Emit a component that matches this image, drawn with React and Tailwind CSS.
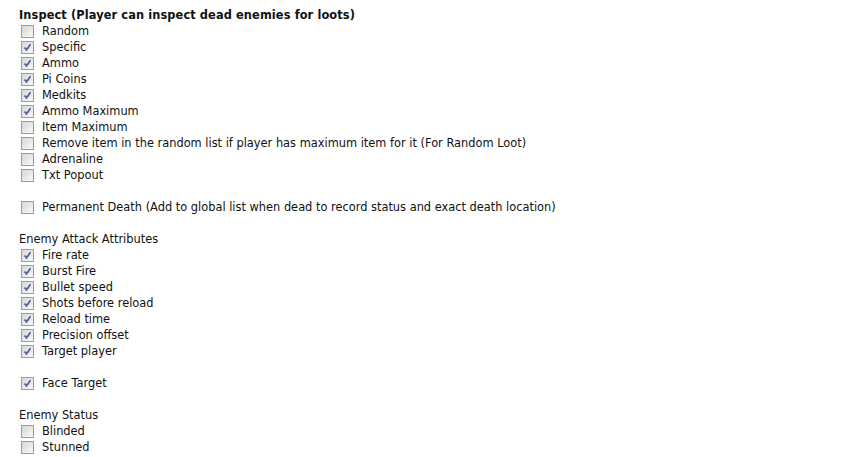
import React from 'react'

const sections = [
  { title: 'Inspect (Player can inspect dead enemies for loots)', bold: true, items: [
    ['Random', false], ['Specific', true], ['Ammo', true], ['Pi Coins', true], ['Medkits', true],
    ['Ammo Maximum', true], ['Item Maximum', false],
    ['Remove item in the random list if player has maximum item for it (For Random Loot)', false],
    ['Adrenaline', false], ['Txt Popout', false],
  ] },
  { items: [['Permanent Death (Add to global list when dead to record status and exact death location)', false]] },
  { title: 'Enemy Attack Attributes', items: [
    ['Fire rate', true], ['Burst Fire', true], ['Bullet speed', true], ['Shots before reload', true],
    ['Reload time', true], ['Precision offset', true], ['Target player', true],
  ] },
  { items: [['Face Target', true]] },
  { title: 'Enemy Status', items: [['Blinded', false], ['Stunned', false]] },
]

const Box = ({ checked }) => (
  <span className="w-[13px] h-[13px] border border-[#9c9c9c] bg-gradient-to-br from-[#d8d8d8] to-[#f7f7f7] flex items-center justify-center shrink-0">
    {checked && (
      <svg width="9" height="9" viewBox="0 0 9 9">
        <path d="M1.5 4.5 L3.5 6.8 L7.5 1.2" fill="none" stroke="#4a5fa0" strokeWidth="1.7" />
      </svg>
    )}
  </span>
)

export default function App() {
  return (
    <div className="w-[850px] h-[457px] bg-white pt-[7px] pl-[19px] text-[#111] text-[11.4px] leading-[16px] font-['DejaVu_Sans',sans-serif] overflow-hidden">
      {sections.map((s, i) => (
        <div key={i} className={i > 0 ? 'mt-[16px]' : ''}>
          {s.title && <div className={s.bold ? 'font-bold tracking-[0.1px]' : ''}>{s.title}</div>}
          {s.items.map(([label, checked]) => (
            <div key={label} className="flex items-center h-[16px] pl-[2px]">
              <Box checked={checked} />
              <span className="ml-[8px] whitespace-nowrap">{label}</span>
            </div>
          ))}
        </div>
      ))}
    </div>
  )
}
